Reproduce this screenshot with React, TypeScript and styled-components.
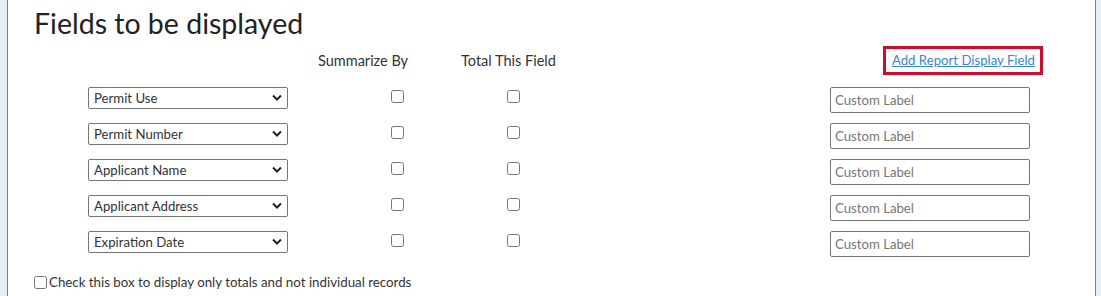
import React from "react";
import styled, { createGlobalStyle } from "styled-components";

const Global = createGlobalStyle`
  html, body { margin: 0; padding: 0; background: #e9eef3; }
  body { font-family: "Lato", "Noto Sans", sans-serif; color: #222; }
`;

const Page = styled.div`
  display: flex;
  padding: 0 5px 0 7px;
  height: 296px;
  box-sizing: border-box;
`;

const Panel = styled.section`
  flex: 1;
  background: #fff;
  border-left: 1px solid #4a8ac0;
  border-right: 1px solid #4a8ac0;
  padding: 5px 0 0 0;
  display: flex;
  flex-direction: column;
`;

const Title = styled.h2`
  margin: 0 0 0 26px;
  font-size: 28.5px;
  font-weight: 400;
  line-height: 36px;
  color: #222;
`;

const HeaderRow = styled.div`
  display: flex;
  align-items: center;
  height: 30px;
  margin-top: 4px;
`;

const HeadLabel = styled.span<{ $left: number; $width: number }>`
  margin-left: ${(p) => p.$left}px;
  width: ${(p) => p.$width}px;
  font-size: 14.5px;
  color: #333;
  white-space: nowrap;
`;

const LinkBox = styled.div`
  margin-left: auto;
  margin-right: 52px;
  border: 3px solid #c8102e;
  height: 23px;
  padding: 0 5px 0 6px;
  display: flex;
  align-items: center;
`;

const AddLink = styled.a`
  color: #3b87c4;
  font-size: 13.2px;
  text-decoration: underline;
  cursor: pointer;
`;

const Rows = styled.div`
  display: flex;
  flex-direction: column;
  gap: 10px;
  margin-top: 12px;
`;

const Row = styled.div`
  display: grid;
  grid-template-columns: 80px 200px 103px 13px 103px 13px 1fr 200px 65px;
  align-items: start;
  height: 26px;
`;

const SelectWrap = styled.div`
  grid-column: 2;
  position: relative;
  height: 22px;
`;

const Select = styled.select`
  appearance: none;
  width: 200px;
  height: 22px;
  box-sizing: border-box;
  border: 1px solid #767676;
  border-radius: 2px;
  background: #fff;
  font-family: "Lato", "Noto Sans", sans-serif;
  font-size: 13.2px;
  color: #333;
  padding: 0 20px 0 5px;
  margin: 0;
`;

const Chevron = styled.svg`
  position: absolute;
  right: 6px;
  top: 7px;
  width: 10px;
  height: 8px;
  pointer-events: none;
`;

const Check = styled.input.attrs({ type: "checkbox" })<{ $col: number }>`
  grid-column: ${(p) => p.$col};
  width: 13px;
  height: 13px;
  margin: 3px 0 0 0;
`;

const LabelInput = styled.input`
  grid-column: 8;
  width: 200px;
  height: 26px;
  box-sizing: border-box;
  border: 1px solid #767676;
  border-radius: 2px;
  font-family: "Lato", "Noto Sans", sans-serif;
  font-size: 13.2px;
  padding: 0 4px;
  margin: 0;
  &::placeholder { color: #777; }
`;

const Footer = styled.label`
  display: flex;
  align-items: center;
  margin: 17px 0 0 26px;
  font-size: 13.3px;
  color: #333;
  gap: 2px;
`;

const FooterCheck = styled.input.attrs({ type: "checkbox" })`
  width: 13px;
  height: 13px;
  margin: 0;
`;

const fields = [
  "Permit Use",
  "Permit Number",
  "Applicant Name",
  "Applicant Address",
  "Expiration Date",
];

export default function App() {
  return (
    <>
      <Global />
      <Page>
        <Panel>
          <Title>Fields to be displayed</Title>
          <HeaderRow>
            <HeadLabel $left={310} $width={143}>Summarize By</HeadLabel>
            <HeadLabel $left={0} $width={110}>Total This Field</HeadLabel>
            <LinkBox>
              <AddLink>Add Report Display Field</AddLink>
            </LinkBox>
          </HeaderRow>
          <Rows>
            {fields.map((f) => (
              <Row key={f}>
                <SelectWrap>
                  <Select defaultValue={f}>
                    <option>{f}</option>
                  </Select>
                  <Chevron viewBox="0 0 10 8">
                    <path d="M1 1.5 L5 5.5 L9 1.5" fill="none" stroke="#222" strokeWidth="2" />
                  </Chevron>
                </SelectWrap>
                <Check $col={4} />
                <Check $col={6} />
                <LabelInput placeholder="Custom Label" />
              </Row>
            ))}
          </Rows>
          <Footer>
            <FooterCheck />
            Check this box to display only totals and not individual records
          </Footer>
        </Panel>
      </Page>
    </>
  );
}
